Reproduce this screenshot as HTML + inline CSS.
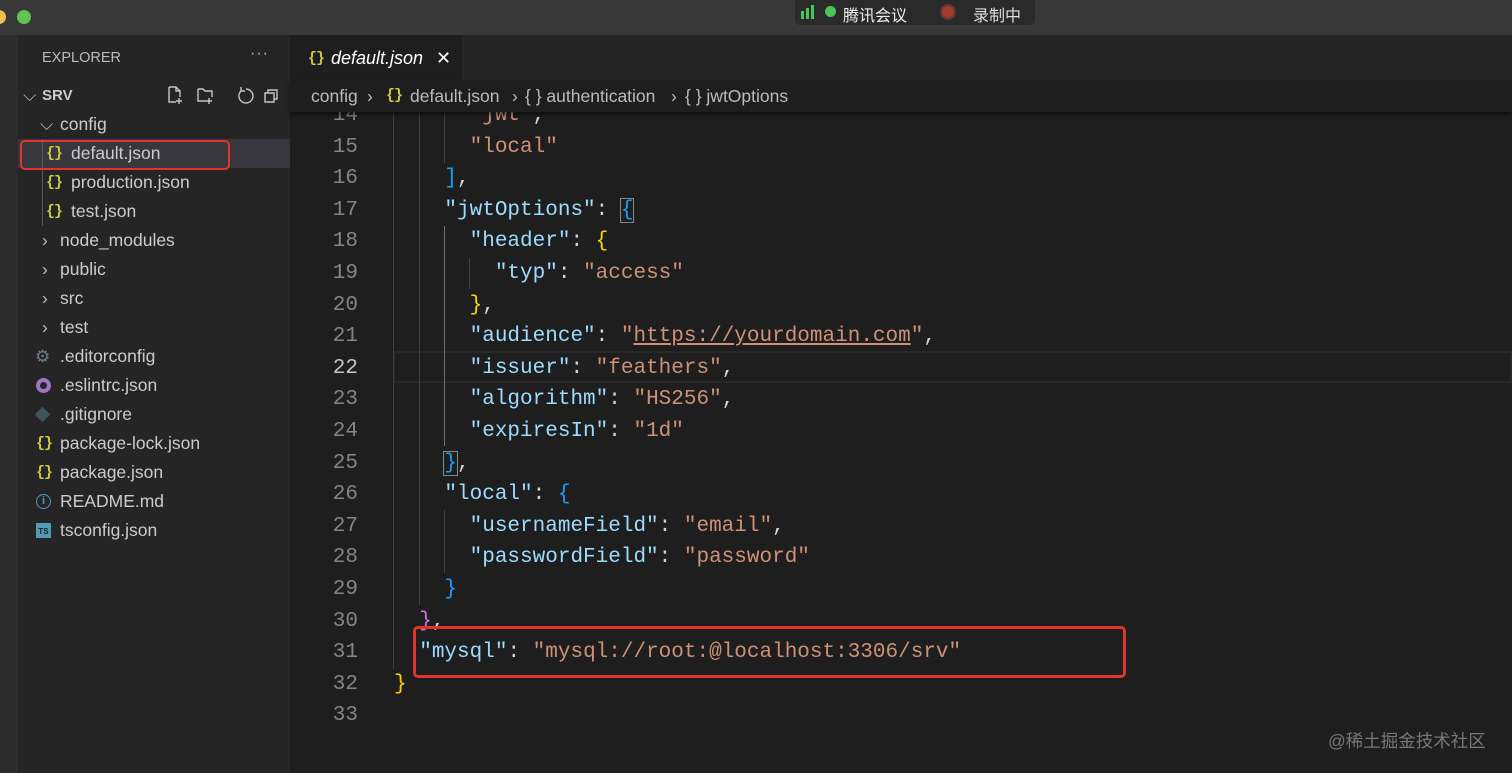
<!DOCTYPE html>
<html><head><meta charset="utf-8"><style>
*{margin:0;padding:0;box-sizing:border-box}
body{width:1512px;height:773px;overflow:hidden;background:#1e1e1e;font-family:"Liberation Sans","Noto Sans CJK SC",sans-serif;position:relative}
.abs{position:absolute}
#title{left:0;top:0;width:1512px;height:35px;background:#383838}
#strip{left:0;top:35px;width:18px;height:738px;background:#2c2c2c}
#side{left:18px;top:35px;width:272px;height:738px;background:#252526;color:#cccccc}
.row{position:absolute;left:0;width:272px;height:29px;line-height:29px;font-size:17.5px;white-space:nowrap}
.br{color:#cbcb41;font-family:"Liberation Mono",monospace;font-size:15px;font-weight:bold;letter-spacing:-1px}
#tabs{left:290px;top:35px;width:1222px;height:45px;background:#252526}
#tab{left:290px;top:35px;width:172px;height:45px;background:#1e1e1e;color:#fff;font-size:18px;font-style:italic;line-height:47px}
#crumb{left:290px;top:80px;width:1222px;height:32px;background:#1e1e1e;color:#bbb;font-size:17.5px;line-height:32px;box-shadow:0 3px 4px rgba(0,0,0,.5);z-index:5}
#crumb span{position:absolute;white-space:nowrap}
#code{left:290px;top:100px;width:1222px;font-family:"Liberation Mono",monospace;font-size:21px;z-index:1}
.l{position:relative;height:31.6px;line-height:31.6px;white-space:pre}
.n{position:absolute;left:0;width:68px;text-align:right;color:#858585}
.c{position:absolute;left:104px;color:#d4d4d4}
.k{color:#9cdcfe}.s{color:#ce9178}.y{color:#ffd700}.p{color:#da70d6}.b{color:#179fff}
.g{position:absolute;width:1px;background:#404040;z-index:2}
</style></head><body>
<div id="title" class="abs">
 <div class="abs" style="left:-8px;top:10px;width:14px;height:14px;border-radius:7px;background:#f5bf4f"></div>
 <div class="abs" style="left:17px;top:10px;width:14px;height:14px;border-radius:7px;background:#61c554"></div>
 <div class="abs" style="left:795px;top:0;width:240px;height:25px;background:#2a2a2a;border-radius:0 0 5px 5px"></div>
 <div class="abs" style="left:801px;top:11px;width:3px;height:8px;background:#4cc35a"></div>
 <div class="abs" style="left:806px;top:8px;width:3px;height:11px;background:#4cc35a"></div>
 <div class="abs" style="left:811px;top:5px;width:3px;height:14px;background:#4cc35a"></div>
 <div class="abs" style="left:825px;top:6px;width:11px;height:11px;border-radius:6px;background:#4cc35a"></div>
 <div class="abs" style="left:843px;top:2px;color:#eee;font-size:16px">腾讯会议</div>
 <div class="abs" style="left:940px;top:4px;width:16px;height:16px;border-radius:8px;background:#a33a2e;border:2px solid #5a3a3a"></div>
 <div class="abs" style="left:973px;top:2px;color:#ddd;font-size:16px">录制中</div>
</div>
<div id="strip" class="abs"></div>
<div id="side" class="abs">
 <div class="abs" style="left:24px;top:15px;font-size:14.5px;color:#bbb">EXPLORER</div>
 <div class="abs" style="left:232px;top:10px;font-size:16px;color:#bbb;letter-spacing:1px">···</div>
 <div class="row" style="top:46px"><span style="position:absolute;left:5px;color:#bbb">⌵</span><b style="position:absolute;left:24px;font-size:15px">SRV</b>
  <svg class="abs" style="left:148px;top:4px" width="112" height="22" fill="none" stroke="#c5c5c5" stroke-width="1.4"><path d="M3 2h7l4 4v6M3 2v15h7M10 2v4h4M13 13v6M10 16h6"/><path d="M32 4h5l2 2h7v6M32 4v12h8M43 13v6M40 16h6"/><path d="M80 4a7 7 0 1 1-5 2M75 2v4h4"/><path d="M99 8h9v9h-9zM102 8V5h9v9h-3"/></svg></div>
 <div class="row" style="top:75px"><span style="position:absolute;left:22px;color:#bbb">⌵</span><span style="position:absolute;left:42px">config</span></div>
 <div class="row" style="top:104px;background:#37373d"><span class="br" style="position:absolute;left:28px">{}</span><span style="position:absolute;left:53px">default.json</span></div>
 <div class="row" style="top:133px"><span class="br" style="position:absolute;left:28px">{}</span><span style="position:absolute;left:53px">production.json</span></div>
 <div class="row" style="top:162px"><span class="br" style="position:absolute;left:28px">{}</span><span style="position:absolute;left:53px">test.json</span></div>
 <div class="abs" style="left:24px;top:104px;width:1px;height:87px;background:#585858"></div>
 <div class="row" style="top:191px"><span style="position:absolute;left:24px;color:#bbb">›</span><span style="position:absolute;left:42px">node_modules</span></div>
 <div class="row" style="top:220px"><span style="position:absolute;left:24px;color:#bbb">›</span><span style="position:absolute;left:42px">public</span></div>
 <div class="row" style="top:249px"><span style="position:absolute;left:24px;color:#bbb">›</span><span style="position:absolute;left:42px">src</span></div>
 <div class="row" style="top:278px"><span style="position:absolute;left:24px;color:#bbb">›</span><span style="position:absolute;left:42px">test</span></div>
 <div class="row" style="top:307px"><span style="position:absolute;left:17px;color:#6d8086;font-size:17px">⚙</span><span style="position:absolute;left:42px">.editorconfig</span></div>
 <div class="row" style="top:336px"><span style="position:absolute;left:18px;top:7px;width:15px;height:15px;border-radius:50%;border:4px solid #a074c4"></span><span style="position:absolute;left:42px">.eslintrc.json</span></div>
 <div class="row" style="top:365px"><span style="position:absolute;left:19px;top:9px;width:11px;height:11px;background:#41535b;transform:rotate(45deg)"></span><span style="position:absolute;left:42px">.gitignore</span></div>
 <div class="row" style="top:394px"><span class="br" style="position:absolute;left:18px">{}</span><span style="position:absolute;left:42px">package-lock.json</span></div>
 <div class="row" style="top:423px"><span class="br" style="position:absolute;left:18px">{}</span><span style="position:absolute;left:42px">package.json</span></div>
 <div class="row" style="top:452px"><span style="position:absolute;left:18px;top:7px;width:15px;height:15px;border-radius:50%;border:1.5px solid #519aba;color:#519aba;font-size:11px;line-height:12px;text-align:center;font-weight:bold">i</span><span style="position:absolute;left:42px">README.md</span></div>
 <div class="row" style="top:481px"><span style="position:absolute;left:18px;top:7px;width:15px;height:15px;background:#519aba;color:#1e1e1e;font-size:8px;line-height:17px;text-align:center;font-weight:bold">TS</span><span style="position:absolute;left:42px">tsconfig.json</span></div>
</div>
<div class="abs" style="left:20px;top:140px;width:210px;height:30px;border:2.5px solid #e0352b;border-radius:5px;z-index:6"></div>
<div id="tabs" class="abs"></div>
<div id="tab" class="abs"><span class="br" style="position:absolute;left:18px;font-style:normal">{}</span><span style="position:absolute;left:41px">default.json</span><span style="position:absolute;left:146px;font-style:normal;font-size:18px">✕</span></div>
<div id="crumb" class="abs"><span style="left:21px">config</span><span style="left:77px">›</span><span class="br" style="left:96px">{}</span><span style="left:120px">default.json</span><span style="left:222px">›</span><span style="left:235px">{ } authentication</span><span style="left:381px">›</span><span style="left:395px">{ } jwtOptions</span></div>
<div class="abs" style="left:393px;top:351px;width:1119px;height:32px;border:2px solid #282828;z-index:0"></div>
<div class="g" style="left:393px;top:100px;height:569px"></div>
<div class="g" style="left:419px;top:100px;height:505px"></div>
<div class="g" style="left:444px;top:100px;height:63px"></div>
<div class="g" style="left:444px;top:226px;height:220px;background:#707070"></div>
<div class="g" style="left:444px;top:510px;height:63px"></div>
<div class="g" style="left:469px;top:258px;height:31px"></div>
<div id="code" class="abs">
<div class="l"><span class="n">14</span><span class="c">      <span class="s">"jwt"</span>,</span></div>
<div class="l"><span class="n">15</span><span class="c">      <span class="s">"local"</span></span></div>
<div class="l"><span class="n">16</span><span class="c">    <span class="b">]</span>,</span></div>
<div class="l"><span class="n">17</span><span class="c">    <span class="k">"jwtOptions"</span>: <span class="b" style="outline:1px solid #888">{</span></span></div>
<div class="l"><span class="n">18</span><span class="c">      <span class="k">"header"</span>: <span class="y">{</span></span></div>
<div class="l"><span class="n">19</span><span class="c">        <span class="k">"typ"</span>: <span class="s">"access"</span></span></div>
<div class="l"><span class="n">20</span><span class="c">      <span class="y">}</span>,</span></div>
<div class="l"><span class="n">21</span><span class="c">      <span class="k">"audience"</span>: <span class="s">"<u>https://yourdomain.com</u>"</span>,</span></div>
<div class="l"><span class="n" style="color:#c6c6c6">22</span><span class="c">      <span class="k">"issuer"</span>: <span class="s">"feathers"</span>,</span></div>
<div class="l"><span class="n">23</span><span class="c">      <span class="k">"algorithm"</span>: <span class="s">"HS256"</span>,</span></div>
<div class="l"><span class="n">24</span><span class="c">      <span class="k">"expiresIn"</span>: <span class="s">"1d"</span></span></div>
<div class="l"><span class="n">25</span><span class="c">    <span class="b" style="outline:1px solid #888">}</span>,</span></div>
<div class="l"><span class="n">26</span><span class="c">    <span class="k">"local"</span>: <span class="b">{</span></span></div>
<div class="l"><span class="n">27</span><span class="c">      <span class="k">"usernameField"</span>: <span class="s">"email"</span>,</span></div>
<div class="l"><span class="n">28</span><span class="c">      <span class="k">"passwordField"</span>: <span class="s">"password"</span></span></div>
<div class="l"><span class="n">29</span><span class="c">    <span class="b">}</span></span></div>
<div class="l"><span class="n">30</span><span class="c">  <span class="p">}</span>,</span></div>
<div class="l"><span class="n">31</span><span class="c">  <span class="k">"mysql"</span>: <span class="s">"mysql://root:@localhost:3306/srv"</span></span></div>
<div class="l"><span class="n">32</span><span class="c"><span class="y">}</span></span></div>
<div class="l"><span class="n">33</span><span class="c"></span></div>
</div>
<div class="abs" style="left:413px;top:626px;width:713px;height:52px;border:3px solid #e0352b;border-radius:5px;z-index:6"></div>
<div class="abs" style="left:1328px;top:728px;color:#777;font-size:17.5px">@稀土掘金技术社区</div>
</body></html>
